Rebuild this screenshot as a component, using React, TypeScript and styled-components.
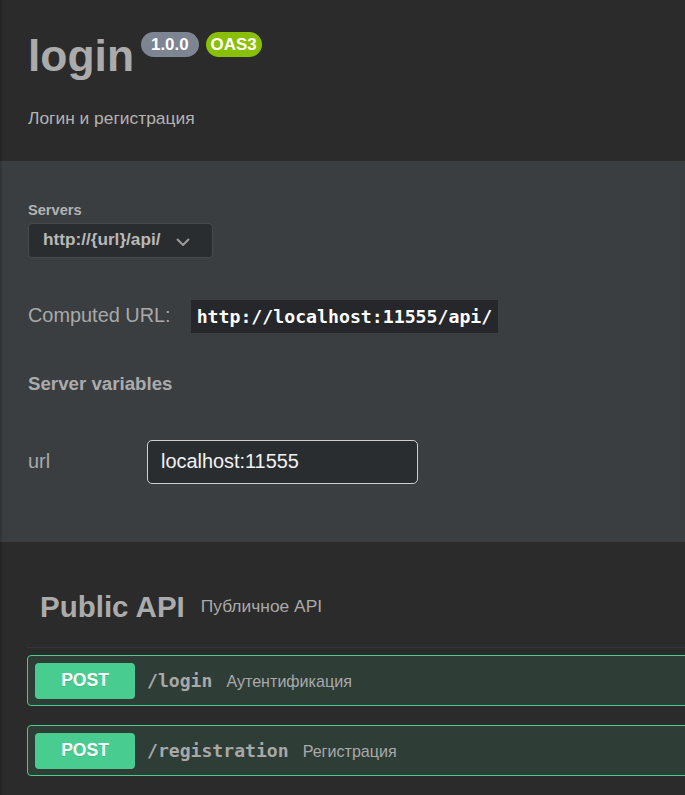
import React from "react";
import styled, { createGlobalStyle } from "styled-components";

const GlobalStyle = createGlobalStyle`
  html, body {
    margin: 0;
    padding: 0;
    background: #2b2b2b;
    overflow: hidden;
  }
  body {
    font-family: "Liberation Sans", Arial, sans-serif;
  }
  * { box-sizing: border-box; }
`;

const SANS = `"Liberation Sans", Arial, sans-serif`;
const MONO = `"DejaVu Sans Mono", "Liberation Mono", monospace`;

const Page = styled.div`
  display: flex;
  flex-direction: column;
  min-height: 795px;
  background: #2b2b2b;
`;

const Header = styled.header`
  padding: 30px 0 33px 28px;
  background: #2b2b2b;
  box-shadow: inset 2px 0 0 rgba(0, 0, 0, 0.14);
`;

const TitleRow = styled.div`
  display: flex;
  align-items: flex-start;
`;

const Title = styled.h2`
  margin: 0;
  font: 700 44.4px/51px ${SANS};
  color: #ababab;
`;

const Badge = styled.span<{ $bg: string; $pad: number; $gap: number }>`
  margin: 2px 0 0 ${(p) => p.$gap}px;
  height: 25px;
  padding: 0 ${(p) => p.$pad}px;
  border-radius: 57px;
  background: ${(p) => p.$bg};
  color: #ffffff;
  font: 700 16.9px/25px ${SANS};
`;

const Description = styled.p`
  margin: 27px 0 0;
  font: 400 17.4px/20px ${SANS};
  color: #b3b3b3;
`;

const ServersSection = styled.section`
  background: #3a3e41;
  padding: 41px 28px 58px;
  box-shadow: inset 2px 0 0 rgba(0, 0, 0, 0.14);
`;

const SmallLabel = styled.div`
  font: 700 14.6px/1.2 ${SANS};
  color: #b3b3b3;
  margin-bottom: 3px;
`;

const Select = styled.div`
  display: flex;
  align-items: center;
  width: 185px;
  height: 35px;
  padding: 0 22px 0 14px;
  border: 1px solid #46494e;
  border-radius: 4px;
  background: #2a2d30;
  font: 700 17.2px/1 ${SANS};
  color: #b8b8b8;
`;

const Chevron = styled.svg`
  margin: 3px 0 0 auto;
  flex: none;
`;

const ComputedRow = styled.div`
  display: flex;
  align-items: center;
  margin-top: 42px;
`;

const RegularLabel = styled.span<{ $size: number; $width?: number }>`
  font: 400 ${(p) => p.$size}px/1.2 ${SANS};
  color: #a9a9a9;
  ${(p) => (p.$width ? `width: ${p.$width}px; flex: none;` : "")}
`;

const Code = styled.code`
  margin-left: 20px;
  height: 33px;
  padding: 0 6px;
  background: #25272a;
  font: 700 18.2px/33px ${MONO};
  color: #ffffff;
`;

const SubHeading = styled.h4`
  margin: 40px 0 0;
  font: 700 18.7px/1.2 ${SANS};
  color: #ababab;
`;

const VarRow = styled.div`
  display: flex;
  align-items: center;
  margin-top: 45px;
`;

const TextInput = styled.input`
  width: 271px;
  height: 44px;
  padding: 0 13px;
  border: 1px solid #cfcfcf;
  border-radius: 5px;
  background: #2a2d30;
  font: 400 19.9px ${SANS};
  color: #f2f2f2;
  outline: none;
`;

const ApiSection = styled.section`
  flex: 1;
  padding: 47px 0 0 27px;
  box-shadow: inset 2px 0 0 rgba(0, 0, 0, 0.14);
`;

const TagHeader = styled.div`
  display: flex;
  align-items: center;
  padding: 0 13px 23px;
  border-bottom: 1px solid #35363d;
`;

const TagTitle = styled.h3`
  margin: 0;
  font: 700 29.5px/35px ${SANS};
  color: #ababab;
`;

const TagNote = styled.small`
  margin-left: 16px;
  font: 400 17.4px/20px ${SANS};
  color: #a9a9a9;
`;

const OpList = styled.div`
  display: flex;
  flex-direction: column;
  gap: 19px;
  margin: 7px -20px 0 0;
`;

const OpBlock = styled.div`
  display: flex;
  align-items: center;
  padding: 7px 7px 6px;
  border: 1px solid #49cc90;
  border-radius: 4px;
  background: #2e3d36;
`;

const Method = styled.span`
  display: flex;
  align-items: center;
  justify-content: center;
  width: 100px;
  height: 36px;
  border-radius: 4px;
  background: #49cc90;
  color: #ffffff;
  font: 700 17.5px/1 ${SANS};
  text-shadow: 0 1px 0 rgba(0, 0, 0, 0.1);
`;

const Path = styled.span`
  margin-left: 12px;
  font: 700 18.1px/1 ${MONO};
  color: #a8a8a8;
`;

const OpDesc = styled.span`
  margin-left: 14px;
  font: 400 16.1px/1 ${SANS};
  color: #a9a9a9;
`;

const ops = [
  { path: "/login", desc: "Аутентификация" },
  { path: "/registration", desc: "Регистрация" },
];

export default function App() {
  return (
    <Page>
      <GlobalStyle />
      <Header>
        <TitleRow>
          <Title>login</Title>
          <Badge $bg="#7d8492" $pad={10} $gap={7}>1.0.0</Badge>
          <Badge $bg="#89bf04" $pad={5} $gap={7}>OAS3</Badge>
        </TitleRow>
        <Description>Логин и регистрация</Description>
      </Header>

      <ServersSection>
        <SmallLabel>Servers</SmallLabel>
        <Select>
          <span>http://{"{url}"}/api/</span>
          <Chevron width="14" height="8" viewBox="0 0 14 8">
            <polyline points="1,1 7,7 13,1" fill="none" stroke="#9c9c9c" strokeWidth="2" />
          </Chevron>
        </Select>

        <ComputedRow>
          <RegularLabel $size={19.9}>Computed URL:</RegularLabel>
          <Code>http://localhost:11555/api/</Code>
        </ComputedRow>

        <SubHeading>Server variables</SubHeading>

        <VarRow>
          <RegularLabel $size={19.9} $width={119}>url</RegularLabel>
          <TextInput defaultValue="localhost:11555" />
        </VarRow>
      </ServersSection>

      <ApiSection>
        <TagHeader>
          <TagTitle>Public API</TagTitle>
          <TagNote>Публичное API</TagNote>
        </TagHeader>
        <OpList>
          {ops.map((op) => (
            <OpBlock key={op.path}>
              <Method>POST</Method>
              <Path>{op.path}</Path>
              <OpDesc>{op.desc}</OpDesc>
            </OpBlock>
          ))}
        </OpList>
      </ApiSection>
    </Page>
  );
}
